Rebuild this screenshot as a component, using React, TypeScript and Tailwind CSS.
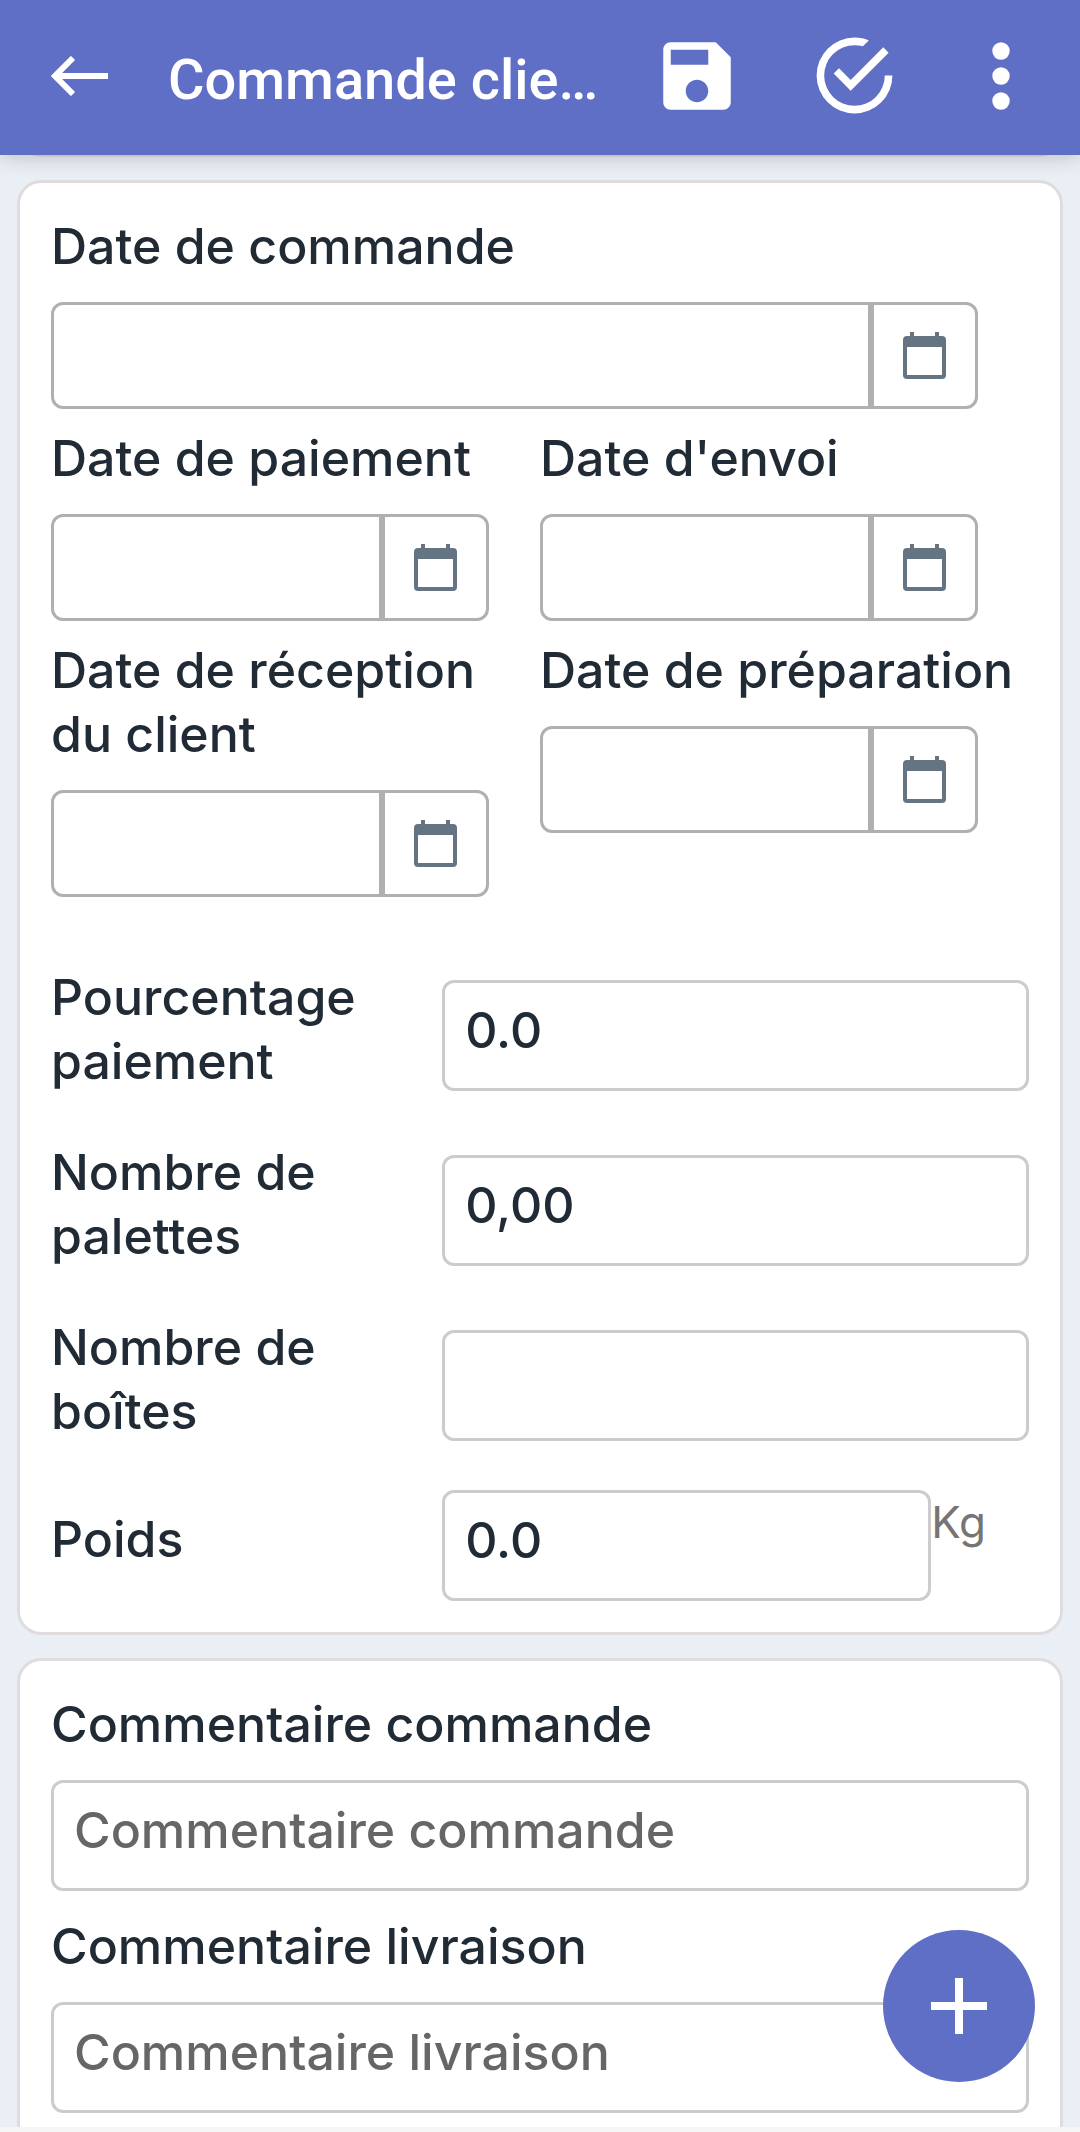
import type { ReactNode } from "react";

const calendarPath =
  "M7 0h4v4h21V0h4v4h3a4 4 0 0 1 4 4v35a4 4 0 0 1-4 4H4a4 4 0 0 1-4-4V8a4 4 0 0 1 4-4h3V0zM4 15v28h35V15H4z";

function CalendarIcon() {
  return (
    <svg viewBox="0 0 43 47" className="h-[47px] w-[43px] fill-[#647482]" aria-hidden="true">
      <path fillRule="evenodd" d={calendarPath} />
    </svg>
  );
}

function DateField({ id, label, className = "" }: { id: string; label: string; className?: string }) {
  return (
    <div className={className}>
      <label htmlFor={id} className="block">
        {label}
      </label>
      <div className="mt-6 mr-[51px] flex h-[107px] rounded-xl border-3 border-[#b0b0b0]">
        <input id={id} type="text" className="min-w-0 flex-1 px-5 outline-none" />
        <button
          type="button"
          aria-label={`Choisir : ${label}`}
          className="flex w-[107px] items-center justify-center border-l-6 border-[#b0b0b0]"
        >
          <CalendarIcon />
        </button>
      </div>
    </div>
  );
}

const inputClass =
  "block h-[111px] w-full rounded-xl border-3 border-[#cccccc] bg-white px-5 pb-3 outline-none placeholder:text-[#666666] placeholder:opacity-100";

function NumberRow({ id, label, value, unit }: { id: string; label: string; value: string; unit?: string }) {
  return (
    <div className="flex items-center">
      <label htmlFor={id} className="w-2/5 pr-16">
        {label}
      </label>
      <div className="flex w-3/5 pt-[13px]">
        <div className={unit ? "w-5/6" : "w-full"}>
          <input id={id} type="text" defaultValue={value} className={inputClass} />
        </div>
        {unit && <span className="text-[44px] font-normal text-[#757575]">{unit}</span>}
      </div>
    </div>
  );
}

function CommentField({ id, label }: { id: string; label: string }) {
  return (
    <div>
      <label htmlFor={id} className="block">
        {label}
      </label>
      <input id={id} type="text" placeholder={label} className={`mt-6 ${inputClass}`} />
    </div>
  );
}

function Card({ children }: { children: ReactNode }) {
  return (
    <section className="mx-[17px] mt-[23px] shrink-0 rounded-3xl border-3 border-[#e0dcde] bg-white p-[31px]">
      {children}
    </section>
  );
}

export default function App() {
  return (
    <div className="flex h-screen flex-col overflow-hidden bg-[#eaeff6] font-['Inter',sans-serif] text-[50px] leading-[64px] font-medium text-[#212b35]">
      <header className="relative z-10 flex h-[155px] shrink-0 items-center bg-[#5f6fc6] pr-9 pb-1 pl-[51px] text-white shadow-[0_2px_20px_rgba(0,0,0,0.2)]">
        <button type="button" aria-label="Retour">
          <svg viewBox="0 0 57 40" className="h-10 w-[57px]" fill="none" stroke="currentColor" strokeWidth="6" aria-hidden="true">
            <path d="M57 20H5M22 2L4 20l18 18" />
          </svg>
        </button>
        <h1 className="ml-[60px] min-w-0 flex-1 truncate pt-2 font-['Roboto',sans-serif] text-[56px] leading-[72px] font-medium">
          Commande client
        </h1>
        <div className="ml-[50px] flex shrink-0 items-center">
          <button type="button" aria-label="Enregistrer">
            <svg viewBox="0 0 24 24" className="size-[90px] fill-current" aria-hidden="true">
              <path d="M17 3H5c-1.11 0-2 .9-2 2v14c0 1.1.89 2 2 2h14c1.1 0 2-.9 2-2V7l-4-4zm-5 16c-1.66 0-3-1.34-3-3s1.34-3 3-3 3 1.34 3 3-1.34 3-3 3zm3-10H5V5h10v4z" />
            </svg>
          </button>
          <button type="button" aria-label="Valider" className="ml-[67px]">
            <svg viewBox="0 0 24 24" className="size-[91px] fill-current" aria-hidden="true">
              <path d="M20,12A8,8 0 0,1 12,20A8,8 0 0,1 4,12A8,8 0 0,1 12,4C12.76,4 13.5,4.11 14.2,4.31L15.77,2.74C14.61,2.26 13.34,2 12,2A10,10 0 0,0 2,12A10,10 0 0,0 12,22A10,10 0 0,0 22,12M7.91,10.08L6.5,11.5L11,16L21,6L19.59,4.58L11,13.17L7.91,10.08Z" />
            </svg>
          </button>
          <button type="button" aria-label="Plus d'options" className="ml-[58px]">
            <svg viewBox="0 0 86 86" className="size-[86px] fill-current" aria-hidden="true">
              <circle cx="43" cy="18" r="8.7" />
              <circle cx="43" cy="43" r="8.7" />
              <circle cx="43" cy="68" r="8.7" />
            </svg>
          </button>
        </div>
      </header>

      <main className="relative flex min-h-0 flex-1 flex-col overflow-hidden">
        <div className="mx-[17px] -mt-6 h-[26px] shrink-0 rounded-b-3xl border-3 border-t-0 border-[#e0dcde] bg-white" />
        <Card>
          <div className="grid grid-cols-2 gap-y-[17px]">
            <DateField id="order-date" label="Date de commande" className="col-span-2" />
            <DateField id="payment-date" label="Date de paiement" />
            <DateField id="shipping-date" label="Date d'envoi" />
            <DateField id="reception-date" label="Date de réception du client" />
            <DateField id="preparation-date" label="Date de préparation" />
          </div>
          <div className="mt-[68px] flex flex-col gap-[47px]">
            <NumberRow id="payment-percent" label="Pourcentage paiement" value="0.0" />
            <NumberRow id="pallets" label="Nombre de palettes" value="0,00" />
            <NumberRow id="boxes" label="Nombre de boîtes" value="" />
          </div>
          <div className="mt-[34px]">
            <NumberRow id="weight" label="Poids" value="0.0" unit="Kg" />
          </div>
        </Card>
        <Card>
          <div className="flex flex-col gap-[23px]">
            <CommentField id="order-comment" label="Commentaire commande" />
            <CommentField id="delivery-comment" label="Commentaire livraison" />
          </div>
        </Card>
        <button
          type="button"
          aria-label="Ajouter"
          className="absolute right-[45px] bottom-[45px] flex size-[152px] items-center justify-center rounded-full bg-[#5f6fc6] text-white"
        >
          <svg viewBox="0 0 56 56" className="size-14" stroke="currentColor" strokeWidth="8" aria-hidden="true">
            <path d="M28 0v56M0 28h56" />
          </svg>
        </button>
      </main>
      <footer className="h-[5px] shrink-0 bg-[#f5f5f5]" />
    </div>
  );
}
